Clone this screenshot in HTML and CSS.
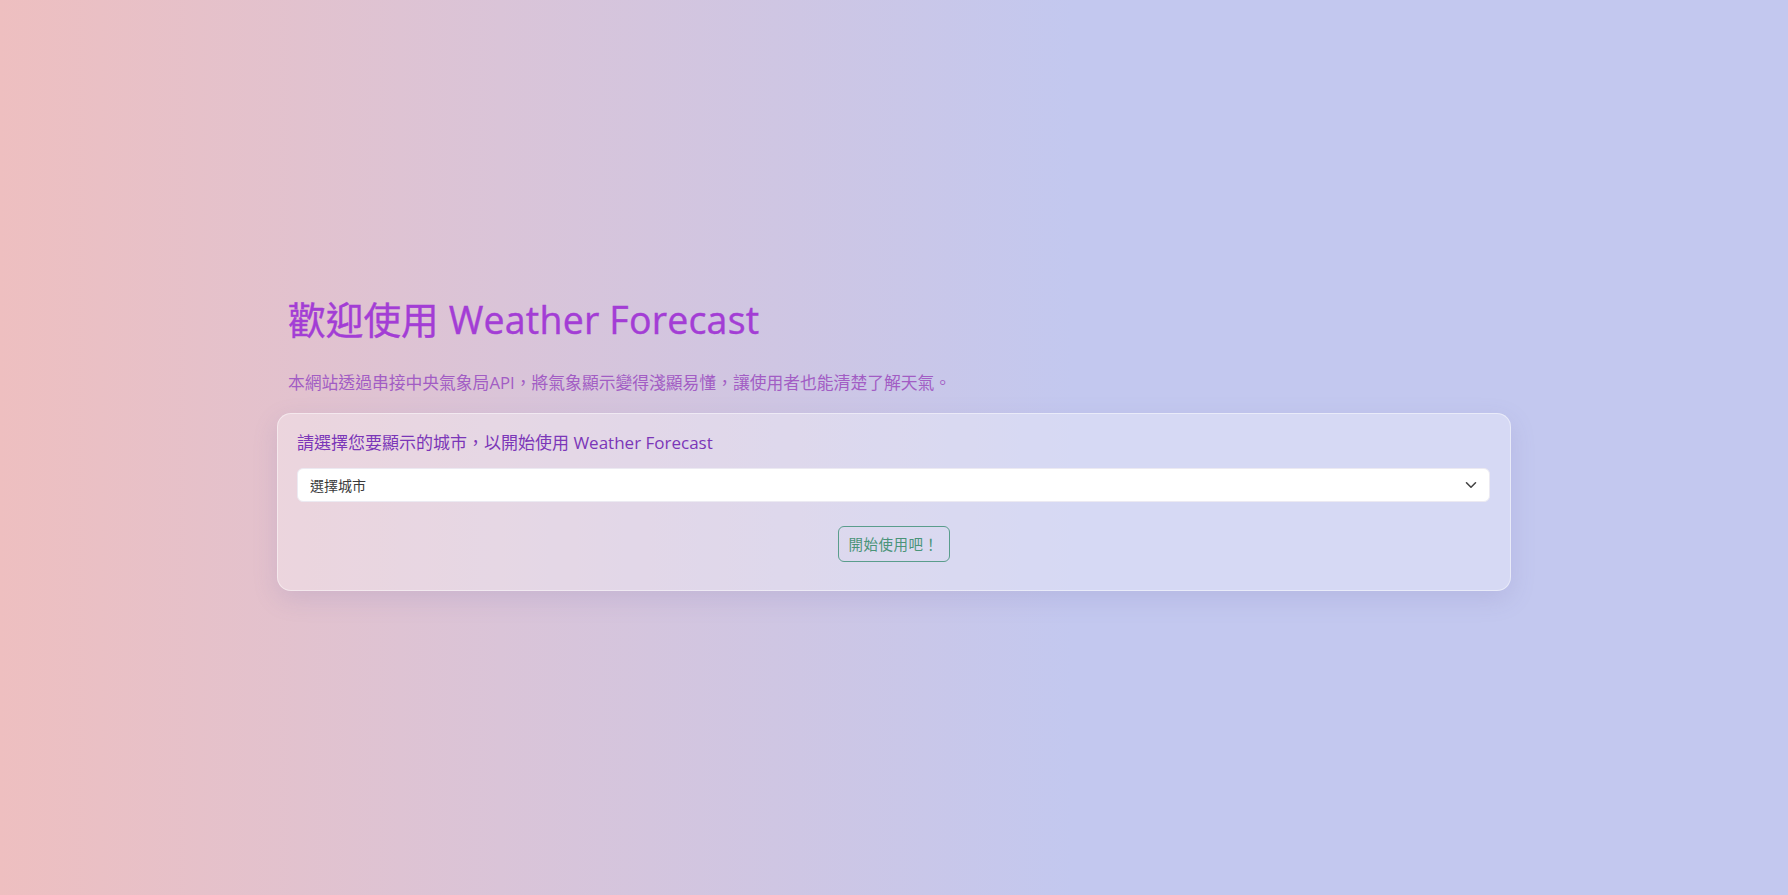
FILE: index.html
```html
<!DOCTYPE html>
<html lang="zh-Hant">
<head>
<meta charset="utf-8">
<title>Weather Forecast</title>
<link rel="stylesheet" href="styles.css">
</head>
<body>
<main class="page">
  <div class="container">
    <header class="hero">
      <h1 class="title">歡迎使用 Weather Forecast</h1>
      <p class="lead">本網站透過串接中央氣象局API，將氣象顯示變得淺顯易懂，讓使用者也能清楚了解天氣。</p>
    </header>
    <section class="card">
      <label class="card-label" for="city">請選擇您要顯示的城市，以開始使用 Weather Forecast</label>
      <div class="select-wrap">
        <select id="city" class="city-select">
          <option>選擇城市</option>
        </select>
        <svg class="chevron" width="12" height="8" viewBox="0 0 12 8" aria-hidden="true"><path d="M1.5 1.8 L6 6.2 L10.5 1.8" fill="none" stroke="#444" stroke-width="1.6" stroke-linecap="round" stroke-linejoin="round"/></svg>
      </div>
      <div class="actions">
        <button class="start-btn" type="button">開始使用吧！</button>
      </div>
    </section>
  </div>
</main>
</body>
</html>
```

FILE: styles.css
```css
* { box-sizing: border-box; }
html, body { margin: 0; padding: 0; }
body {
  min-height: 100vh;
  background: linear-gradient(to right, #eebfc0 0%, #dac4d8 28%, #c3c8ef 60%, #c3c8ef 100%);
  font-family: "Open Sans", "Noto Sans CJK TC", sans-serif;
}
.page {
  min-height: 100vh;
  display: flex;
  align-items: center;
  justify-content: center;
  padding-bottom: 7px;
}
.container {
  width: 1234px;
  display: flex;
  flex-direction: column;
}
.hero {
  padding: 0 11px;
}
.title {
  margin: 0;
  font-size: 37.5px;
  line-height: 44px;
  font-weight: 400;
  letter-spacing: 0.2px;
  color: #a33dd5;
  -webkit-text-stroke: 0.4px #a33dd5;
}
.lead {
  margin: 28px 0 18px;
  font-size: 16.8px;
  line-height: 25px;
  color: #a25dc4;
}
.card {
  background: rgba(255, 255, 255, 0.32);
  border: 1px solid rgba(255, 255, 255, 0.45);
  border-radius: 14px;
  box-shadow: 0 8px 24px rgba(120, 110, 170, 0.18);
  padding: 19px 20px 28px 19px;
  display: flex;
  flex-direction: column;
}
.card-label {
  font-size: 17px;
  line-height: 20px;
  color: #7b36b8;
  margin-bottom: 15px;
  padding-left: 0;
}
.select-wrap {
  position: relative;
}
.city-select {
  appearance: none;
  -webkit-appearance: none;
  width: 100%;
  height: 34px;
  border: 1px solid #eceaf2;
  border-radius: 6px;
  background: #fff;
  font-family: "Noto Sans CJK TC", sans-serif;
  font-size: 14px;
  color: #3a3a3a;
  padding: 0 12px;
  outline: none;
}
.chevron {
  position: absolute;
  right: 13px;
  top: 13px;
  pointer-events: none;
}
.actions {
  display: flex;
  justify-content: center;
  margin-top: 24px;
}
.start-btn {
  height: 36px;
  width: 112px;
  background: transparent;
  border: 1px solid #5a9d8c;
  border-radius: 6px;
  color: #4a9479;
  font-family: "Noto Sans CJK TC", sans-serif;
  font-size: 14.5px;
  padding: 0;
  letter-spacing: 0.5px;
}
```
